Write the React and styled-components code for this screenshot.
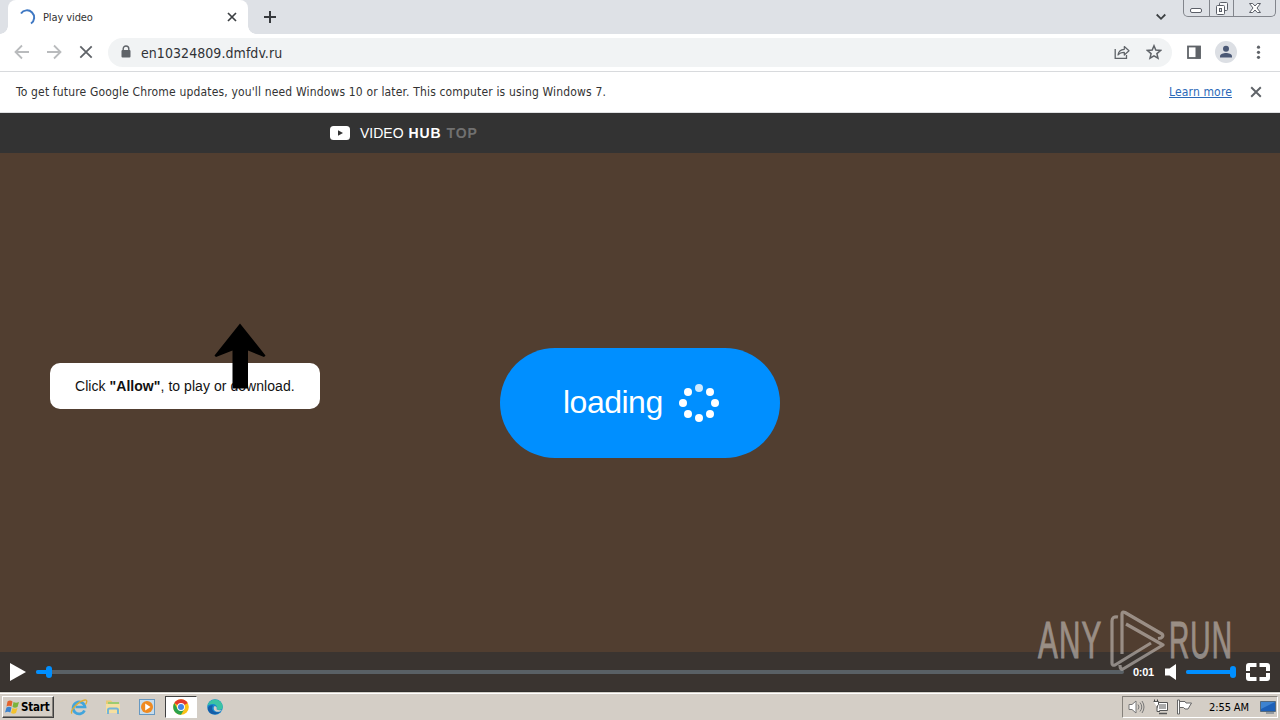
import React from "react";
import styled, { createGlobalStyle } from "styled-components";

const GlobalStyle = createGlobalStyle`
    * {
        box-sizing: border-box;
    }

    body {
        margin: 0;
        overflow: hidden;
        background: #fff;
    }

    svg {
        display: block;
        flex: none;
    }
`;

const Screen = styled.div`
    position: relative;
    display: flex;
    flex-direction: column;
    width: 1280px;
    height: 720px;
    overflow: hidden;
    font-family: "DejaVu Sans Condensed", "DejaVu Sans", sans-serif;
`;

const Label = styled.span`
    white-space: nowrap;
    font-size: ${(props) => props.$size}px;
    letter-spacing: ${(props) => props.$spacing || 0}px;
    color: ${(props) => props.$color || "#333"};
    font-weight: ${(props) => (props.$bold ? "bold" : "normal")};
`;

const TabStrip = styled.div`
    display: flex;
    height: 34px;
    padding-left: 8px;
    background: #dee1e6;
`;

const Tab = styled.div`
    position: relative;
    display: flex;
    align-items: center;
    width: 240px;
    height: 34px;
    padding: 0 11px 0 12px;
    background: #fff;
    border-radius: 8px 8px 0 0;

    &::before,
    &::after {
        content: "";
        position: absolute;
        bottom: 0;
        width: 8px;
        height: 8px;
    }

    &::before {
        left: -8px;
        background: radial-gradient(circle at 0 0, transparent 7.5px, #fff 8px);
    }

    &::after {
        right: -8px;
        background: radial-gradient(circle at 100% 0, transparent 7.5px, #fff 8px);
    }
`;

const TabTitle = styled.div`
    flex: 1;
    padding-left: 7px;
    line-height: 16px;
`;

const NewTab = styled.div`
    padding: 10px 0 0 15px;
`;

const WindowArea = styled.div`
    display: flex;
    margin-left: auto;
    padding-right: 4px;
`;

const TabSearch = styled.div`
    padding: 13px 17px 0 0;
`;

const WindowButtons = styled.div`
    display: flex;
    width: 93px;
    height: 17px;
    border: 1px solid #82858c;
    border-top: 0;
    border-radius: 0 0 5px 5px;
`;

const WindowButton = styled.div`
    display: flex;
    justify-content: center;
    width: ${(props) => props.$width}px;
    border-left: ${(props) => (props.$first ? "0" : "1px solid #82858c")};
`;

const Toolbar = styled.div`
    display: flex;
    align-items: center;
    height: 38px;
    padding: 0 14px;
    border-bottom: 1px solid #d8dadd;
    background: #fff;
`;

const NavIcons = styled.div`
    display: flex;
    gap: 16px;
    width: 94px;
    padding-bottom: 1px;
`;

const AddressBar = styled.div`
    display: flex;
    align-items: center;
    width: 1064px;
    height: 29px;
    padding: 0 10px 1px 12px;
    border-radius: 15px;
    background: #f1f3f4;
`;

const Address = styled.div`
    flex: 1;
    padding: 1px 0 0 9px;
    line-height: 20px;
`;

const AddressIcons = styled.div`
    display: flex;
    gap: 16px;
`;

const ToolIcons = styled.div`
    display: flex;
    align-items: center;
    gap: 13px;
    padding: 0 0 1px 14px;
`;

const InfoBar = styled.div`
    display: flex;
    align-items: center;
    height: 41px;
    padding: 0 18px 1px 16px;
    border-bottom: 1px solid #dfe0e2;
    background: #fff;
`;

const LearnMore = styled.a`
    margin-left: auto;
    margin-right: 18px;
    color: #2b69b8;
    font-size: 12px;
    letter-spacing: 0.15px;
    text-decoration: underline;
    white-space: nowrap;
`;

const SiteHeader = styled.header`
    display: flex;
    align-items: center;
    height: 40px;
    padding-left: 330px;
    background: #333;
    font-family: "Liberation Sans", Arial, sans-serif;
`;

const Brand = styled.div`
    display: flex;
    gap: 5px;
    padding-left: 10px;
    line-height: 18px;
`;

const Video = styled.main`
    position: relative;
    display: flex;
    justify-content: center;
    height: 499px;
    padding-top: 195px;
    background: #513e30;
    font-family: "Liberation Sans", Arial, sans-serif;
`;

const LoadingButton = styled.div`
    display: flex;
    align-items: center;
    width: 280px;
    height: 110px;
    padding-left: 63px;
    gap: 16px;
    border-radius: 55px;
    background: #008fff;
`;

const LoadingText = styled.div`
    display: flex;
    width: 100px;
    padding-bottom: 2px;
`;

const Hint = styled.div`
    position: absolute;
    top: 210px;
    left: 50px;
    display: flex;
    align-items: center;
    width: 270px;
    height: 46px;
    padding-left: 25px;
    border-radius: 10px;
    background: #fff;
`;

const HintArrow = styled.svg`
    position: absolute;
    top: 170px;
    left: 214px;
`;

const Controls = styled.div`
    display: flex;
    align-items: center;
    height: 40px;
    padding-left: 10px;
    background: #3a3430;
    border-bottom: 1px solid #302e2c;
    font-family: "Liberation Sans", Arial, sans-serif;
`;

const Track = styled.div`
    display: flex;
    align-items: center;
    width: ${(props) => props.$width}px;
    height: 4px;
    margin-left: ${(props) => props.$left}px;
    border-radius: 2px;
    background: #596065;
`;

const Fill = styled.div`
    height: 4px;
    border-radius: 2px;
    background: #008fff;
`;

const Knob = styled.div`
    flex: none;
    width: 6px;
    height: 12px;
    margin-left: -3px;
    border-radius: 3px;
    background: #008fff;
`;

const Time = styled.div`
    width: 31px;
    padding-left: 9px;
    line-height: 16px;
`;

const Watermark = styled.div`
    position: absolute;
    top: 608px;
    left: 1038px;
    opacity: 0.52;
`;

const Taskbar = styled.footer`
    display: flex;
    align-items: flex-start;
    height: 28px;
    padding: 3px 2px 0;
    border-top: 1px solid #d4d0c8;
    box-shadow: inset 0 1px 0 #fff;
    background: #d4cec6;
`;

const StartButton = styled.div`
    display: flex;
    align-items: center;
    width: 52px;
    height: 22px;
    padding: 0 0 1px 1px;
    gap: 1px;
    border: 1px solid;
    border-color: #fff #404040 #404040 #fff;
    box-shadow: inset -1px -1px 0 #85817b;
`;

const QuickLaunch = styled.div`
    display: flex;
    align-items: center;
    padding-left: 8px;
`;

const TaskIcon = styled.div`
    display: flex;
    align-items: center;
    justify-content: center;
    width: ${(props) => (props.$active ? 32 : 34)}px;
    height: 22px;
    margin: ${(props) => (props.$active ? "0 1px" : "0")};
    padding-bottom: 1px;
    border: 1px solid;
    border-color: ${(props) =>
        props.$active ? "#404040 #fff #fff #404040" : "transparent"};
    background: ${(props) => (props.$active ? "#fff" : "transparent")};
`;

const Tray = styled.div`
    display: flex;
    align-items: center;
    width: 156px;
    height: 22px;
    margin-left: auto;
    padding: 0 0 1px 5px;
    border: 1px solid;
    border-color: #85817b #fff #fff #85817b;
`;

const TrayIcons = styled.div`
    display: flex;
    gap: 7px;
`;

const Clock = styled.div`
    width: 51px;
    margin-left: 16px;
    line-height: 16px;
`;

const CloseIcon = ({ size, color, width }) => (
    <svg width={size} height={size} viewBox="0 0 10 10">
        <path d="M1 1l8 8M9 1L1 9" stroke={color} strokeWidth={width} fill="none" />
    </svg>
);

const ArrowIcon = ({ flip }) => (
    <svg width="16" height="16" viewBox="0 0 16 16">
        <path
            d="M15 8H2M8 1.5L1.5 8 8 14.5"
            transform={flip ? "translate(16 0) scale(-1 1)" : undefined}
            stroke="#b9bbbd"
            strokeWidth="1.8"
            fill="none"
        />
    </svg>
);

const Spinner = () => {
    const dots = [
        [20, 5], [31, 9], [36, 20], [31, 31], [20, 35], [9, 31], [4, 20], [9, 9],
    ];

    return (
        <svg width="40" height="40" viewBox="0 0 40 40">
            {dots.map(([x, y], i) => (
                <circle key={i} cx={x} cy={y} r="4" fill={i === 0 ? "#cfeaff" : "#fff"} />
            ))}
        </svg>
    );
};

const WatermarkText = styled.span`
    display: inline-block;
    width: ${(props) => props.$width}px;
    font-family: "Liberation Sans", Arial, sans-serif;
    font-size: 52px;
    line-height: 60px;
    letter-spacing: 2px;
    color: #ddd8d4;
    -webkit-text-stroke: 1px #ddd8d4;
    white-space: nowrap;
    transform: scaleX(${(props) => props.$scale});
    transform-origin: 0 0;
`;

const WatermarkRow = styled.div`
    display: flex;
    align-items: center;
`;

const App = () => {
    return (
        <Screen>
            <GlobalStyle />

            <TabStrip>
                <Tab>
                    <svg width="16" height="16" viewBox="0 0 16 16">
                        <path d="M1 4.5A7.2 7.2 0 1 1 11 14.5" fill="none" stroke="#3f78c3" strokeWidth="2" />
                    </svg>
                    <TabTitle>
                        <Label $size={11} $spacing={-0.1}>Play video</Label>
                    </TabTitle>
                    <CloseIcon size={10} color="#3c4043" width={1.7} />
                </Tab>
                <NewTab>
                    <svg width="14" height="14" viewBox="0 0 14 14">
                        <path d="M7 1v12M1 7h12" stroke="#36393d" strokeWidth="2" />
                    </svg>
                </NewTab>
                <WindowArea>
                    <TabSearch>
                        <svg width="10" height="8" viewBox="0 0 10 8">
                            <path d="M.7 1.5L5 5.8l4.3-4.3" fill="none" stroke="#3c4043" strokeWidth="1.8" />
                        </svg>
                    </TabSearch>
                    <WindowButtons>
                        <WindowButton $width={25} $first>
                            <svg width="14" height="16" viewBox="0 0 14 16">
                                <rect x="1.5" y="8.5" width="11" height="4" rx="1.5" fill="#fff" stroke="#5b5f68" />
                            </svg>
                        </WindowButton>
                        <WindowButton $width={25}>
                            <svg width="14" height="16" viewBox="0 0 14 16">
                                <rect x="4.5" y="2.5" width="8" height="8" rx="1" fill="#f5f6f8" stroke="#5b5f68" />
                                <rect x="1.5" y="5.5" width="8" height="9" rx="1" fill="#fff" stroke="#5b5f68" />
                                <rect x="4.5" y="8.5" width="2" height="3" fill="#dee1e6" stroke="#5b5f68" />
                            </svg>
                        </WindowButton>
                        <WindowButton $width={42}>
                            <svg width="14" height="16" viewBox="0 0 14 16">
                                <path
                                    d="M1.5 3.5h3.2L7 6l2.3-2.5h3.2L9 8l3.5 4.5H9.3L7 10l-2.3 2.5H1.5L5 8z"
                                    fill="#fff"
                                    stroke="#5b5f68"
                                />
                            </svg>
                        </WindowButton>
                    </WindowButtons>
                </WindowArea>
            </TabStrip>

            <Toolbar>
                <NavIcons>
                    <ArrowIcon />
                    <ArrowIcon flip />
                    <svg width="16" height="16" viewBox="0 0 16 16">
                        <path d="M2.3 2.3l11.4 11.4M13.7 2.3L2.3 13.7" stroke="#5f6368" strokeWidth="1.8" />
                    </svg>
                </NavIcons>
                <AddressBar>
                    <svg width="12" height="14" viewBox="0 0 12 14">
                        <path d="M3.2 6V3.8a2.8 2.8 0 0 1 5.6 0V6" fill="none" stroke="#5f6368" strokeWidth="1.4" />
                        <rect x="1.5" y="5" width="9" height="7.5" rx="1" fill="#5f6368" />
                    </svg>
                    <Address>
                        <Label $size={14} $spacing={0.06} $color="#303236">en10324809.dmfdv.ru</Label>
                    </Address>
                    <AddressIcons>
                        <svg width="16" height="16" viewBox="0 0 16 16">
                            <path d="M1.2 5v9.3h11.3V11" fill="none" stroke="#5f6368" strokeWidth="1.3" />
                            <path
                                d="M4 11c.4-3.6 2.5-5.5 6.3-5.7V2.5L15 6.8 10.3 11V8.3C7.5 8.3 5.5 9 4 11z"
                                fill="none"
                                stroke="#5f6368"
                                strokeWidth="1.2"
                                strokeLinejoin="round"
                            />
                        </svg>
                        <svg width="16" height="16" viewBox="0 0 16 16">
                            <path
                                d="M8 1.8l1.8 4.3 4.7.4-3.6 3.1 1.1 4.6L8 11.8l-4 2.4 1.1-4.6L1.5 6.5l4.7-.4z"
                                fill="none"
                                stroke="#5f6368"
                                strokeWidth="1.5"
                            />
                        </svg>
                    </AddressIcons>
                </AddressBar>
                <ToolIcons>
                    <svg width="16" height="16" viewBox="0 0 16 16">
                        <rect x="2" y="2.5" width="12" height="11.5" fill="none" stroke="#5f6368" strokeWidth="1.8" />
                        <path d="M9.5 2h5v12.5h-5z" fill="#5f6368" />
                    </svg>
                    <svg width="22" height="22" viewBox="0 0 22 22">
                        <circle cx="11" cy="11" r="11" fill="#dcdfe4" />
                        <circle cx="11" cy="7.8" r="3" fill="#4a5875" />
                        <path d="M5 16.5v-1.2c0-2.3 3.5-3.3 6-3.3s6 1 6 3.3v1.2z" fill="#4a5875" />
                    </svg>
                    <svg width="16" height="16" viewBox="0 0 16 16">
                        <circle cx="8.5" cy="3.2" r="1.6" fill="#5f6368" />
                        <circle cx="8.5" cy="8.3" r="1.6" fill="#5f6368" />
                        <circle cx="8.5" cy="13.3" r="1.6" fill="#5f6368" />
                    </svg>
                </ToolIcons>
            </Toolbar>

            <InfoBar>
                <Label $size={12} $spacing={0.16}>
                    To get future Google Chrome updates, you'll need Windows 10 or later. This computer is using Windows 7.
                </Label>
                <LearnMore>Learn more</LearnMore>
                <CloseIcon size={12} color="#5f6368" width={1.6} />
            </InfoBar>

            <SiteHeader>
                <svg width="20" height="14" viewBox="0 0 20 14">
                    <rect width="20" height="14" rx="3.5" fill="#fff" />
                    <path d="M8 4.200v5.600L13 7z" fill="#333" />
                </svg>
                <Brand>
                    <Label $size={14} $color="#fff">VIDEO</Label>
                    <Label $size={14} $color="#fff" $spacing={0.9} $bold>HUB</Label>
                    <Label $size={14} $color="#707070" $spacing={0.9} $bold>TOP</Label>
                </Brand>
            </SiteHeader>

            <Video>
                <LoadingButton>
                    <LoadingText>
                        <Label $size={32} $color="#fff" $spacing={-0.5}>loading</Label>
                    </LoadingText>
                    <Spinner />
                </LoadingButton>
                <Hint>
                    <Label $size={14} $color="#111" $spacing={0.05}>
                        Click <b>"Allow"</b>, to play or download.
                    </Label>
                </Hint>
                <HintArrow width="52" height="68" viewBox="0 0 52 68">
                    <path d="M26 .5L51.5 32.5 50 34 34 27.500V65.500H18.500V27.500L2 34 .5 32.500z" />
                </HintArrow>
            </Video>

            <Controls>
                <svg width="16" height="18" viewBox="0 0 16 18">
                    <path d="M0 0l16 9-16 9z" fill="#fff" />
                </svg>
                <Track $width={1088} $left={10}>
                    <Fill style={{ width: 13 }} />
                    <Knob />
                </Track>
                <Time>
                    <Label $size={11} $color="#fff" $spacing={-0.3} $bold>0:01</Label>
                </Time>
                <svg width="31" height="18" viewBox="0 0 31 18">
                    <path d="M10 5.500h4.500L21 1v16l-6.500-4.500H10z" fill="#fff" />
                </svg>
                <Track $width={50} $left={0}>
                    <Fill style={{ width: 48 }} />
                    <Knob />
                </Track>
                <svg width="34" height="18" viewBox="0 0 34 18">
                    <path
                        d="M20.500 2H13a1 1 0 0 0-1 1v5M23.500 2H31a1 1 0 0 1 1 1v5M12 10v5a1 1 0 0 0 1 1h7.500M23.500 16H31a1 1 0 0 0 1-1v-5"
                        fill="none"
                        stroke="#fff"
                        strokeWidth="4"
                    />
                </svg>
            </Controls>

            <Taskbar>
                <StartButton>
                    <svg width="16" height="16" viewBox="0 0 15 16">
                        <path d="M3 2.500Q5.500.5 8 2.500L7 7.500Q4.500 6 2 7.500z" fill="#e3632c" />
                        <path d="M9 3q2.500 1.500 5.500 0L13 8q-2.500 1.500-5 0z" fill="#7bb33b" />
                        <path d="M2 8.500Q4.500 7 7 8.500l-1.200 5Q3.500 12 .5 13.500z" fill="#3c83ce" />
                        <path d="M8 9q2.500 1.500 5 0l-1.500 5q-2.500 1.500-5 0z" fill="#f3c22d" />
                    </svg>
                    <Label $size={11.5} $color="#000" $spacing={-0.2} $bold>Start</Label>
                </StartButton>
                <QuickLaunch>
                    <TaskIcon>
                        <svg width="18" height="18" viewBox="0 0 18 18">
                            <path d="M14.500 12.500A6 6 0 1 1 15 9H5.500" fill="none" stroke="#42a5dc" strokeWidth="2.700" />
                            <path d="M2 15.500C-.5 13 8 3 15 2c3-.3 1.500 3 .5 4.500" fill="none" stroke="#dfae35" strokeWidth="1.300" />
                        </svg>
                    </TaskIcon>
                    <TaskIcon>
                        <svg width="16" height="16" viewBox="0 0 16 16">
                            <path d="M1 3V1.500h5L7.500 3H14v8H1z" fill="#e8ca74" />
                            <path d="M3 3h11v2H3z" fill="#9ccb70" />
                            <path d="M1 5h14v9H1z" fill="#f5dfa0" />
                            <path d="M3 15v-4q0-1.500 1.500-1.500h7Q13 9.500 13 11v4" fill="none" stroke="#74b5d8" strokeWidth="2" />
                        </svg>
                    </TaskIcon>
                    <TaskIcon>
                        <svg width="16" height="16" viewBox="0 0 16 16">
                            <rect x=".5" y=".5" width="15" height="15" fill="#c6dcec" stroke="#6698c1" />
                            <circle cx="8" cy="8" r="6" fill="#ef8a20" />
                            <path d="M6.200 4.500v7L11.500 8z" fill="#fff" />
                        </svg>
                    </TaskIcon>
                    <TaskIcon $active>
                        <svg width="16" height="16" viewBox="0 0 16 16">
                            <circle cx="8" cy="8" r="7.8" fill="#fbc116" />
                            <path d="M8 8L1.250 4.100A7.800 7.800 0 0 1 14.750 4.100z" fill="#e33b2e" />
                            <path d="M1.250 4.100A7.800 7.800 0 0 0 8 15.800L11.400 10 4.600 10z" fill="#2ba24c" />
                            <circle cx="8" cy="8" r="3.9" fill="#fff" />
                            <circle cx="8" cy="8" r="3" fill="#4285e8" />
                        </svg>
                    </TaskIcon>
                    <TaskIcon>
                        <svg width="16" height="16" viewBox="0 0 16 16">
                            <circle cx="8" cy="8" r="7.8" fill="#1687cf" />
                            <path d="M.3 7A7.800 7.800 0 0 1 15.800 8c0 3-4 3.500-6 2.300C11 8 9 5 6 5 3 5 1 6 .3 7z" fill="#3bc3a4" />
                            <path d="M6 6.500c-3 4 1 8 7.500 6.500C9 17 2 15.500 1 11 0 7 4 5.500 6 6.500z" fill="#155da8" />
                            <path d="M7 7.500c2-1 3.500 1 2.500 2.800 1.500 1.200 4 1.200 5.700.4C13 14 5 13.500 7 7.500z" fill="#d4cec6" />
                        </svg>
                    </TaskIcon>
                </QuickLaunch>
                <Tray>
                    <TrayIcons>
                        <svg width="17" height="16" viewBox="0 0 17 16">
                            <path d="M1 5.500h3L8 2v12l-4-3.500H1z" fill="#fff" stroke="#777" />
                            <path d="M10 5.500q2 2.500 0 5M12 3.500q3.500 4.500 0 9M14 2q4 6 0 12" fill="none" stroke="#777" />
                        </svg>
                        <svg width="17" height="16" viewBox="0 0 17 16">
                            <path d="M5.500 3.500h10v8h-10z" fill="#fff" stroke="#555" />
                            <path d="M7 5h7v5H7z" fill="#aaa" />
                            <path d="M7 14.500h8" stroke="#555" strokeWidth="1.500" />
                            <path d="M1.500 2.500h5v3L5 7.500v5h3" fill="#fff" stroke="#555" />
                            <path d="M2.500 2.500V.5M5.500 2.500V.5" stroke="#444" />
                        </svg>
                        <svg width="17" height="16" viewBox="0 0 17 16">
                            <path d="M3 2.500h6l1 1.500h5.500L12 10H9L7.500 8.500H3z" fill="#fff" stroke="#666" />
                            <path d="M1.500 1v14h2V1z" fill="#fff" stroke="#666" />
                        </svg>
                    </TrayIcons>
                    <Clock>
                        <Label $size={11} $color="#000" $spacing={-0.1}>2:55 AM</Label>
                    </Clock>
                    <svg width="16" height="14" viewBox="0 0 16 14">
                        <path d="M.5 1.500h15v10H.5z" fill="#1d60b8" stroke="#53697e" />
                        <path d="M1 2h14L1 9z" fill="#3e83d0" />
                        <path d="M6 13h8" stroke="#53697e" />
                    </svg>
                </Tray>
            </Taskbar>

            <Watermark>
                <WatermarkRow>
                    <WatermarkText $width={70} $scale={0.57}>ANY</WatermarkText>
                    <svg width="61" height="64" viewBox="0 0 61 64">
                        <path
                            d="M14 46V6q0-3 3-1.500L54 26q2 2-1 4l-3 .5M18 16L55 37 15 61q-3 1-3-4M10 9q-6-1-6 4v42q0 3 3 2L43 35"
                            fill="none"
                            stroke="#ddd8d4"
                            strokeWidth="3.2"
                            strokeLinejoin="round"
                        />
                    </svg>
                    <WatermarkText $width={64} $scale={0.54}>RUN</WatermarkText>
                </WatermarkRow>
            </Watermark>
        </Screen>
    );
};

export default App;
